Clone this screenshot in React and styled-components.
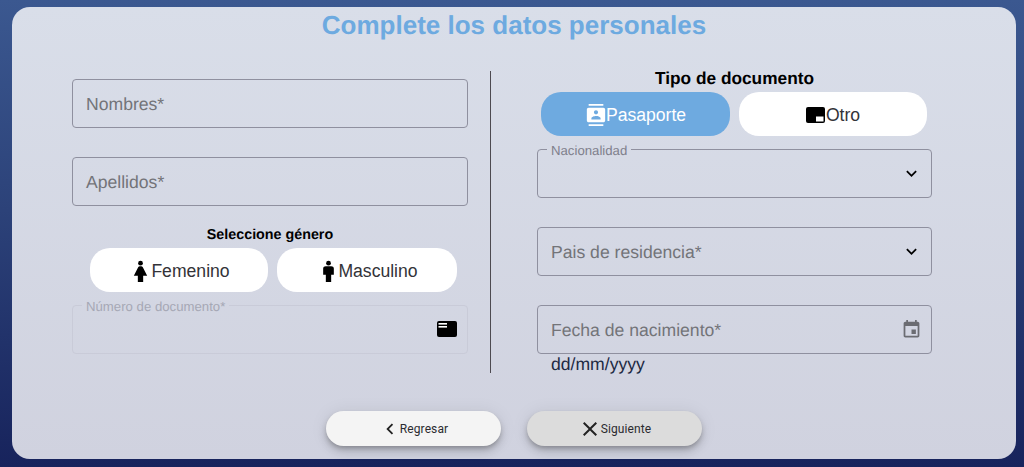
import React from 'react';
import styled, { createGlobalStyle } from 'styled-components';

const GlobalStyle = createGlobalStyle`
  html, body {
    margin: 0;
    padding: 0;
  }
  body {
    font-family: "Liberation Sans", Arial, sans-serif;
    text-rendering: geometricPrecision;
  }
`;

const Page = styled.div`
  box-sizing: border-box;
  width: 1024px;
  height: 467px;
  padding: 7px 8px 8px 12px;
  overflow: hidden;
  background: linear-gradient(180deg, #3b5890 0%, #2c4279 45%, #17235c 100%);
`;

const Card = styled.main`
  display: flex;
  flex-direction: column;
  height: 452px;
  border-radius: 18px;
  background: linear-gradient(180deg, #d9dee9 0%, #d0d2df 100%);
`;

const Title = styled.h1`
  margin: 0;
  height: 36px;
  font-size: 26px;
  line-height: 36px;
  font-weight: 700;
  text-align: center;
  color: #6daae0;
`;

const Columns = styled.div`
  display: flex;
  height: 302px;
  margin-top: 28px;
  padding-left: 60px;
`;

const LeftColumn = styled.section`
  display: flex;
  flex-direction: column;
  width: 396px;
  padding-top: 8px;
`;

const Divider = styled.div`
  width: 1px;
  margin-left: 22px;
  background: #4d4a50;
`;

const RightColumn = styled.section`
  display: flex;
  flex-direction: column;
  width: 395px;
  margin-left: 46px;
`;

const FieldStack = styled.div`
  display: flex;
  flex-direction: column;
  gap: 29px;
`;

const Field = styled.fieldset`
  box-sizing: border-box;
  min-width: 0;
  margin: ${({ $notched }) => ($notched ? '-8px' : '0')} 0 0;
  padding: 0 9px 0 13px;
  height: ${({ $notched }) => ($notched ? '57px' : '49px')};
  border: 1px solid ${({ $disabled }) => ($disabled ? '#c9cbd8' : '#8f909f')};
  border-radius: 4px;
`;

const FieldBody = styled.div`
  display: flex;
  align-items: center;
  justify-content: space-between;
  height: ${({ $notched }) => ($notched ? '31px' : '47px')};
`;

const Legend = styled.legend`
  margin-left: -4px;
  padding: 3px 4px 0;
  font-size: 13.2px;
  line-height: 14px;
  color: ${({ $disabled }) => ($disabled ? '#a6a8b5' : '#7f808c')};
`;

const Placeholder = styled.span`
  padding-top: 2px;
  font-size: 17.6px;
  color: #737479;
`;

const Hint = styled.div`
  padding-left: 14px;
  font-size: 17.6px;
  line-height: 20px;
  color: #1e2a44;
`;

const GroupLabel = styled.div`
  margin: ${({ $small }) => ($small ? '21px 0 5px' : '0 0 7px')};
  font-size: ${({ $small }) => ($small ? '14.3px' : '17.3px')};
  line-height: ${({ $small }) => ($small ? '16px' : '14px')};
  font-weight: 700;
  text-align: center;
  color: #000;
`;

const ToggleRow = styled.div`
  display: flex;
  gap: 9px;
  padding: ${({ $left }) => ($left ? '0 11px 0 18px' : '0 5px 0 4px')};
  margin-bottom: 13px;
`;

const Toggle = styled.button`
  display: flex;
  align-items: center;
  justify-content: center;
  width: ${({ $width }) => $width}px;
  height: 44px;
  padding: 2px 0 0;
  border: 0;
  border-radius: 20px;
  font-family: inherit;
  font-size: 17.6px;
  background: ${({ $active }) => ($active ? '#6eaae0' : '#fff')};
  color: ${({ $active }) => ($active ? '#fff' : '#333338')};

  svg {
    margin-right: ${({ $gap }) => $gap}px;
  }
`;

const Footer = styled.footer`
  display: flex;
  justify-content: center;
  gap: 26px;
  margin-top: 38px;
`;

const ActionButton = styled.button`
  display: flex;
  align-items: center;
  justify-content: center;
  width: 175px;
  height: 35px;
  padding: 0;
  border: 0;
  border-radius: 18px;
  font-family: Roboto, sans-serif;
  font-size: 12px;
  letter-spacing: 0.1px;
  color: #2b2b30;
  background: ${({ $muted }) => ($muted ? '#dcdcdc' : '#f4f4f4')};
  box-shadow: 0 3px 5px -1px rgba(0, 0, 0, 0.25), 0 6px 10px 0 rgba(0, 0, 0, 0.12), 0 1px 18px 0 rgba(0, 0, 0, 0.08);

  svg {
    margin-right: -1px;
  }
`;

const CardGlyph = styled.svg`
  margin: 0 1px 2px 0;
`;

const Icon = ({ size = 24, color = '#000', children }) => (
  <svg width={size} height={size} viewBox="0 0 24 24" fill={color} aria-hidden="true">
    {children}
  </svg>
);

const paths = {
  chevronDown: 'M16.59 8.59 12 13.17 7.41 8.59 6 10l6 6 6-6z',
  chevronLeft: 'M15.41 7.41 14 6l-6 6 6 6 1.41-1.41L10.83 12z',
  close: 'M19 6.41 17.59 5 12 10.59 6.41 5 5 6.41 10.59 12 5 17.59 6.41 19 12 13.41 17.59 19 19 17.59 13.41 12z',
  calendar: 'M17 12h-5v5h5v-5zM16 1v2H8V1H6v2H5c-1.11 0-1.99.9-1.99 2L3 19c0 1.1.89 2 2 2h14c1.1 0 2-.9 2-2V5c0-1.1-.9-2-2-2h-1V1h-2zm3 18H5V8h14v11z',
  contacts: 'M20 0H4v2h16V0zM4 24h16v-2H4v2zM20 4H4c-1.1 0-2 .9-2 2v12c0 1.1.9 2 2 2h16c1.1 0 2-.9 2-2V6c0-1.1-.9-2-2-2zm-8 2.75c1.24 0 2.25 1.01 2.25 2.25s-1.01 2.25-2.25 2.25S9.75 10.24 9.75 9 10.76 6.75 12 6.75zM17 17H7v-1.5c0-1.67 3.33-2.5 5-2.5s5 .83 5 2.5V17z',
  woman: 'M13.94 8.31C13.62 7.52 12.85 7 12 7s-1.62.52-1.94 1.31L7 16h3v6h4v-6h3l-3.06-7.69z',
  man: 'M14 7h-4c-1.1 0-2 .9-2 2v6h2v7h4v-7h2V9c0-1.1-.9-2-2-2z',
};

// the reference figures are broader than the stock glyphs
const PersonIcon = ({ kind }) => (
  <Icon size={25}>
    <path d={paths[kind]} transform="translate(12 0) scale(1.28 1) translate(-12 0)" />
    <circle cx="12" cy="4" r="2.3" />
  </Icon>
);

const PipIcon = () => (
  <svg width="19" height="16" viewBox="0 0 19 16" aria-hidden="true">
    <rect width="19" height="16" rx="2" fill="#000" />
    <rect x="10" y="9.5" width="7.5" height="5" fill="#fff" />
  </svg>
);

const CardIcon = () => (
  <CardGlyph width="20" height="16" viewBox="0 0 20 16" aria-hidden="true">
    <rect width="20" height="16" rx="2" fill="#000" />
    <rect x="1.5" y="2" width="8.5" height="1.6" fill="#fff" />
    <rect x="1.5" y="5" width="8.5" height="1.6" fill="#fff" />
  </CardGlyph>
);

const ChevronDown = () => (
  <Icon size={21}>
    <path d={paths.chevronDown} />
  </Icon>
);

export default function App() {
  return (
    <Page>
      <GlobalStyle />
      <Card>
        <Title>Complete los datos personales</Title>
        <Columns>
          <LeftColumn>
            <FieldStack>
              <Field>
                <FieldBody>
                  <Placeholder>Nombres*</Placeholder>
                </FieldBody>
              </Field>
              <Field>
                <FieldBody>
                  <Placeholder>Apellidos*</Placeholder>
                </FieldBody>
              </Field>
            </FieldStack>
            <GroupLabel $small>Seleccione género</GroupLabel>
            <ToggleRow $left>
              <Toggle $width={178} $gap={-2}>
                <PersonIcon kind="woman" />
                Femenino
              </Toggle>
              <Toggle $width={180} $gap={-3}>
                <PersonIcon kind="man" />
                Masculino
              </Toggle>
            </ToggleRow>
            <Field $notched $disabled>
              <Legend $disabled>Número de documento*</Legend>
              <FieldBody $notched>
                <span />
                <CardIcon />
              </FieldBody>
            </Field>
          </LeftColumn>
          <Divider />
          <RightColumn>
            <GroupLabel>Tipo de documento</GroupLabel>
            <ToggleRow>
              <Toggle $width={189} $gap={-1} $active>
                <Icon size={22} color="#fff">
                  <path d={paths.contacts} />
                </Icon>
                Pasaporte
              </Toggle>
              <Toggle $width={188} $gap={1}>
                <PipIcon />
                Otro
              </Toggle>
            </ToggleRow>
            <FieldStack>
              <Field $notched>
                <Legend>Nacionalidad</Legend>
                <FieldBody $notched>
                  <span />
                  <ChevronDown />
                </FieldBody>
              </Field>
              <Field>
                <FieldBody>
                  <Placeholder>Pais de residencia*</Placeholder>
                  <ChevronDown />
                </FieldBody>
              </Field>
              <Field>
                <FieldBody>
                  <Placeholder>Fecha de nacimiento*</Placeholder>
                  <Icon size={21} color="#6b6c72">
                    <path d={paths.calendar} />
                  </Icon>
                </FieldBody>
              </Field>
            </FieldStack>
            <Hint>dd/mm/yyyy</Hint>
          </RightColumn>
        </Columns>
        <Footer>
          <ActionButton>
            <Icon size={22} color="#222">
              <path d={paths.chevronLeft} />
            </Icon>
            Regresar
          </ActionButton>
          <ActionButton $muted>
            <Icon size={24} color="#222">
              <path d={paths.close} />
            </Icon>
            Siguiente
          </ActionButton>
        </Footer>
      </Card>
    </Page>
  );
}
